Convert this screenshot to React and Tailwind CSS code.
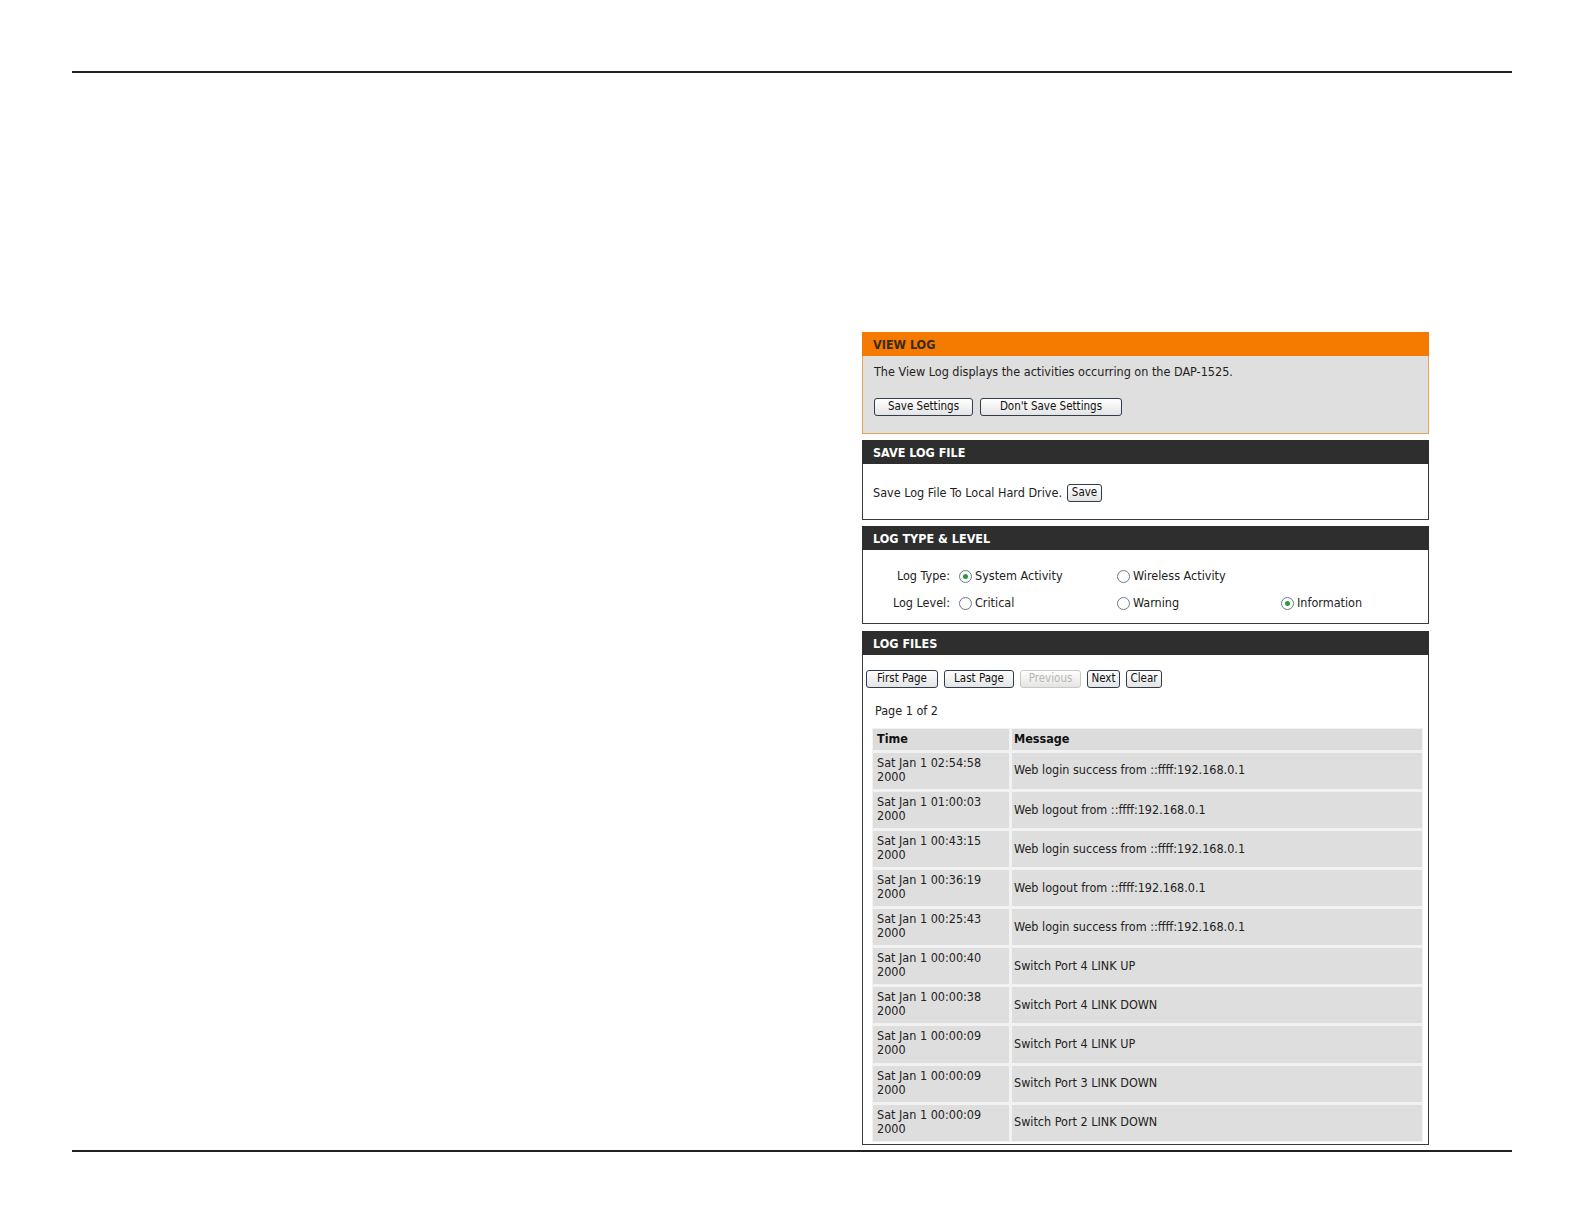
import React from "react";

const font = { fontFamily: '"DejaVu Sans Condensed", Tahoma, "Liberation Sans", sans-serif' };

const LOGS = [
  ["Sat Jan 1 02:54:58", "Web login success from ::ffff:192.168.0.1"],
  ["Sat Jan 1 01:00:03", "Web logout from ::ffff:192.168.0.1"],
  ["Sat Jan 1 00:43:15", "Web login success from ::ffff:192.168.0.1"],
  ["Sat Jan 1 00:36:19", "Web logout from ::ffff:192.168.0.1"],
  ["Sat Jan 1 00:25:43", "Web login success from ::ffff:192.168.0.1"],
  ["Sat Jan 1 00:00:40", "Switch Port 4 LINK UP"],
  ["Sat Jan 1 00:00:38", "Switch Port 4 LINK DOWN"],
  ["Sat Jan 1 00:00:09", "Switch Port 4 LINK UP"],
  ["Sat Jan 1 00:00:09", "Switch Port 3 LINK DOWN"],
  ["Sat Jan 1 00:00:09", "Switch Port 2 LINK DOWN"],
];

function Btn({ children, className = "", disabled }) {
  return (
    <button
      type="button"
      className={`h-[18px] rounded-[3px] border text-[11.5px] leading-none bg-gradient-to-b from-white to-[#e4e4e4] ${
        disabled ? "border-[#c8c8c0] text-[#b8b8b0]" : "border-[#2f3d4c] text-[#111]"
      } ${className}`}
    >
      {children}
    </button>
  );
}

function Radio({ checked, label, className = "" }) {
  return (
    <span className={`flex items-center gap-[3px] ${className}`}>
      <span className="flex h-[13px] w-[13px] items-center justify-center rounded-full border border-[#6a7a8a] bg-white">
        {checked && <span className="h-[5px] w-[5px] rounded-full bg-[#2a9a3a]" />}
      </span>
      <span>{label}</span>
    </span>
  );
}

function DarkHeader({ title }) {
  return (
    <div className="flex h-[24px] items-center bg-[#2e2e2e] px-[11px] pt-[2px] text-[12.5px] font-bold text-white">
      {title}
    </div>
  );
}

export default function App() {
  return (
    <div className="h-[1224px] overflow-hidden bg-white pt-[71px] text-[#222]" style={font}>
      <div className="ml-[72px] h-[2px] w-[1440px] bg-[#222]" />

      <div className="ml-[862px] mt-[259px] w-[567px] text-[12.5px]">
        {/* VIEW LOG */}
        <div>
          <div className="flex h-[24px] items-center bg-[#f57b00] px-[11px] pt-[2px] text-[12.5px] font-bold text-[#3a2a10]">
            VIEW LOG
          </div>
          <div className="h-[78px] border border-t-0 border-[#e9a15a] bg-[#dfdfdf] px-[11px] pt-[7px]">
            <p>The View Log displays the activities occurring on the DAP-1525.</p>
            <div className="mt-[16px] flex gap-[7px]">
              <Btn className="w-[99px]">Save Settings</Btn>
              <Btn className="w-[142px]">Don't Save Settings</Btn>
            </div>
          </div>
        </div>

        {/* SAVE LOG FILE */}
        <div className="mt-[6px]">
          <DarkHeader title="SAVE LOG FILE" />
          <div className="flex h-[56px] items-center border border-t-0 border-[#3a3a3a] bg-white px-[10px] pt-[3px]">
            <span>Save Log File To Local Hard Drive.</span>
            <Btn className="ml-[5px] w-[35px]">Save</Btn>
          </div>
        </div>

        {/* LOG TYPE & LEVEL */}
        <div className="mt-[6px]">
          <DarkHeader title="LOG TYPE & LEVEL" />
          <div className="h-[74px] border border-t-0 border-[#3a3a3a] bg-white pt-[18px]">
            <div className="flex h-[16px] items-center">
              <span className="w-[87px] text-right">Log Type:</span>
              <Radio checked label="System Activity" className="ml-[9px] w-[158px]" />
              <Radio label="Wireless Activity" />
            </div>
            <div className="mt-[11px] flex h-[16px] items-center">
              <span className="w-[87px] text-right">Log Level:</span>
              <Radio label="Critical" className="ml-[9px] w-[158px]" />
              <Radio label="Warning" className="w-[164px]" />
              <Radio checked label="Information" />
            </div>
          </div>
        </div>

        {/* LOG FILES */}
        <div className="mt-[7px]">
          <DarkHeader title="LOG FILES" />
          <div className="h-[490px] border border-t-0 border-[#3a3a3a] bg-white">
            <div className="flex gap-[6px] px-[3px] pt-[15px]">
              <Btn className="w-[72px]">First Page</Btn>
              <Btn className="w-[70px]">Last Page</Btn>
              <Btn disabled className="w-[61px]">Previous</Btn>
              <Btn className="w-[33px]">Next</Btn>
              <Btn className="w-[36px]">Clear</Btn>
            </div>
            <p className="mt-[14px] px-[12px]">Page 1 of 2</p>
            <div className="ml-[9px] mr-[5px] mt-[7px] bg-[#f2f2f2] p-[1px]">
              <div className="grid grid-cols-[136px_1fr] gap-[3px]">
                <div className="flex h-[21px] items-center bg-[#dcdcdc] px-[4px] font-bold text-[#111]">Time</div>
                <div className="flex h-[21px] items-center bg-[#dcdcdc] px-[2px] font-bold text-[#111]">Message</div>
                {LOGS.map(([t, m], i) => (
                  <React.Fragment key={i}>
                    <div className="h-[36.1px] bg-[#dedede] px-[4px] pt-[3px] leading-[14px]">
                      {t}
                      <br />
                      2000
                    </div>
                    <div className="flex h-[36.1px] items-center bg-[#dedede] px-[2px]">{m}</div>
                  </React.Fragment>
                ))}
              </div>
            </div>
          </div>
        </div>
      </div>

      <div className="ml-[72px] mt-[5px] h-[2px] w-[1440px] bg-[#222]" />
    </div>
  );
}
